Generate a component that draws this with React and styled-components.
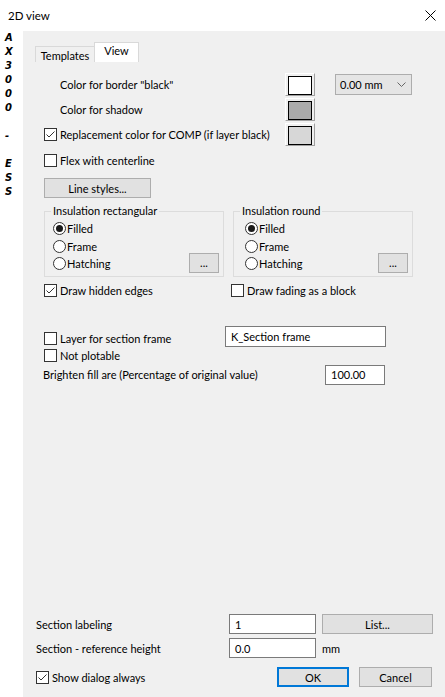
import React from "react";
import styled, { createGlobalStyle, css } from "styled-components";

const Global = createGlobalStyle`
  html, body { margin: 0; padding: 0; background: #fff; }
  body { font-family: Lato, "Noto Sans", sans-serif; font-size: 11px; color: #000; }
  * { box-sizing: border-box; }
`;

const Window = styled.div`
  width: 445px;
  height: 697px;
  display: flex;
  flex-direction: column;
  overflow: hidden;
  background: #fff;
`;

const TitleBar = styled.div`
  height: 31px;
  flex: none;
  display: flex;
  align-items: center;
  justify-content: space-between;
  padding: 0 9px 0 8px;
  background: #fff;
  font-size: 11.5px;
`;

const Body = styled.div`
  flex: 1;
  display: flex;
  min-height: 0;
`;

const SideStrip = styled.div`
  width: 23px;
  flex: none;
  background: #fff;
  display: flex;
  flex-direction: column;
  padding-left: 5px;
  font-family: "DejaVu Sans", sans-serif;
  font-weight: bold;
  font-style: italic;
  font-size: 10px;
  line-height: 14px;
`;

const SideChar = styled.span`
  height: 14px;
`;

const Main = styled.div`
  flex: 1;
  background: #f0f0f0;
  display: flex;
  flex-direction: column;
`;

const TabBar = styled.div`
  display: flex;
  align-items: flex-end;
  height: 20px;
  margin: 11px 0 0 12px;
`;

const Tab = styled.div`
  border: 1px solid #d9d9d9;
  border-bottom: none;
  display: flex;
  align-items: center;
  justify-content: center;
  ${(p) =>
    p.$active
      ? css`
          height: 20px;
          width: 45px;
          background: #fff;
          padding-bottom: 4px;
        `
      : css`
          height: 16px;
          width: 59px;
          background: #f0f0f0;
          border-right: none;
          padding-top: 1px;
        `}
`;

const Page = styled.div`
  display: flex;
  flex-direction: column;
  padding: 11px 0 0 21px;
`;

const FormRow = styled.div`
  display: grid;
  grid-template-columns: 241px 30px 20px 77px;
  align-items: center;
  height: 23px;
  margin-top: ${(p) => p.$mt || 0}px;
`;

const Label = styled.span`
  padding-left: ${(p) => p.$indent || 0}px;
  white-space: nowrap;
`;

const Swatch = styled.div`
  width: 30px;
  height: 23px;
  padding: 2px;
  border: 1px solid;
  border-color: #fff #a0a0a0 #a0a0a0 #fff;
  background: #f0f0f0;
  &::after {
    content: "";
    display: block;
    height: 100%;
    border: 1px solid #000;
    background: ${(p) => p.$color};
  }
`;

const Select = styled.div`
  grid-column: 4;
  width: 77px;
  height: 21px;
  border: 1px solid #adadad;
  background: #e5e5e5;
  display: flex;
  align-items: center;
  justify-content: space-between;
  padding: 0 5px 0 4px;
`;

const CheckWrap = styled.label`
  display: flex;
  align-items: center;
  gap: 3px;
  height: 15px;
  white-space: nowrap;
  margin-top: ${(p) => p.$mt || 0}px;
`;

const Box = styled.span`
  width: 13px;
  height: 13px;
  flex: none;
  border: 1px solid #333;
  background: #fff;
  display: flex;
  align-items: center;
  justify-content: center;
`;

const Circle = styled(Box)`
  border-radius: 50%;
  &::after {
    content: "";
    display: ${(p) => (p.$on ? "block" : "none")};
    width: 7px;
    height: 7px;
    border-radius: 50%;
    background: #1a1a1a;
  }
`;

const Button = styled.div`
  width: ${(p) => p.$w}px;
  height: 20px;
  flex: none;
  border: ${(p) => (p.$default ? "2px solid #0078d7" : "1px solid #adadad")};
  background: #e1e1e1;
  display: flex;
  align-items: center;
  justify-content: center;
  margin-top: ${(p) => p.$mt || 0}px;
`;

const Groups = styled.div`
  display: flex;
  gap: 9px;
  margin-top: 6px;
`;

const Group = styled.fieldset`
  width: 180px;
  margin: 0;
  padding: 2px 4px 3px ${(p) => p.$pl}px;
  border: 1px solid #dcdcdc;
  display: flex;
  align-items: flex-end;
  justify-content: space-between;
`;

const Legend = styled.legend`
  margin-left: ${(p) => p.$ml}px;
  padding: 0 2px;
  line-height: 14px;
`;

const RadioList = styled.div`
  display: flex;
  flex-direction: column;
`;

const RadioRow = styled.label`
  display: flex;
  align-items: center;
  gap: 1px;
  height: 17.5px;
`;

const PairRow = styled.div`
  display: grid;
  grid-template-columns: 187px auto;
  margin-top: 6px;
`;

const LayerRow = styled.div`
  display: grid;
  grid-template-columns: 181px 161px;
  align-items: start;
  margin-top: 28px;
`;

const Input = styled.div`
  width: ${(p) => p.$w}px;
  height: ${(p) => p.$h || 20}px;
  border: 1px solid #7a7a7a;
  background: #fff;
  display: flex;
  align-items: center;
  padding-left: 5px;
  white-space: nowrap;
`;

const BrightRow = styled.div`
  display: grid;
  grid-template-columns: 282px 60px;
  align-items: center;
  margin: 2px 0 0 -1px;
`;

const Bottom = styled.div`
  margin-top: auto;
  padding: 0 0 10px 13px;
  display: flex;
  flex-direction: column;
  gap: 4px;
`;

const BottomRow = styled.div`
  display: grid;
  grid-template-columns: 193px 87px 6px auto;
  align-items: center;
  height: 20px;
`;

const ActionRow = styled.div`
  display: flex;
  align-items: center;
  height: 20px;
  margin-top: 5px;
`;

const Actions = styled.div`
  margin-left: auto;
  margin-right: 13px;
  display: flex;
  gap: 10px;
`;

const Check = ({ on }) => (
  <Box>
    {on && (
      <svg width="11" height="11" viewBox="0 0 11 11">
        <path d="M1.5 5.5 L4 8 L9.5 2.5" fill="none" stroke="#333" strokeWidth="1" />
      </svg>
    )}
  </Box>
);

const CheckItem = ({ on, children, mt }) => (
  <CheckWrap $mt={mt}>
    <Check on={on} />
    <span>{children}</span>
  </CheckWrap>
);

const Radio = ({ on, children }) => (
  <RadioRow>
    <Circle $on={on} />
    <span>{children}</span>
  </RadioRow>
);

const Chevron = () => (
  <svg width="9" height="6" viewBox="0 0 9 6">
    <path d="M0.5 0.5 L4.5 4.5 L8.5 0.5" fill="none" stroke="#666" strokeWidth="1" />
  </svg>
);

const CloseIcon = () => (
  <svg width="11" height="11" viewBox="0 0 11 11">
    <path d="M0.5 0.5 L10.5 10.5 M10.5 0.5 L0.5 10.5" stroke="#000" strokeWidth="1" />
  </svg>
);

const sideChars = ["A", "X", "3", "0", "0", "0", "", "-", "", "E", "S", "S"];

export default function App() {
  return (
    <Window>
      <Global />
      <TitleBar>
        <span>2D view</span>
        <CloseIcon />
      </TitleBar>
      <Body>
        <SideStrip>
          {sideChars.map((c, i) => (
            <SideChar key={i}>{c}</SideChar>
          ))}
        </SideStrip>
        <Main>
          <TabBar>
            <Tab>Templates</Tab>
            <Tab $active>View</Tab>
          </TabBar>
          <Page>
            <FormRow>
              <Label $indent={16}>Color for border "black"</Label>
              <Swatch $color="#ffffff" />
              <Select>
                <span>0.00 mm</span>
                <Chevron />
              </Select>
            </FormRow>
            <FormRow $mt={2}>
              <Label $indent={16}>Color for shadow</Label>
              <Swatch $color="#ababab" />
            </FormRow>
            <FormRow $mt={2}>
              <CheckItem on>Replacement color for COMP (if layer black)</CheckItem>
              <Swatch $color="#d7d7d7" />
            </FormRow>
            <CheckItem mt={7}>Flex with centerline</CheckItem>
            <Button $w={107} $mt={10}>Line styles...</Button>
            <Groups>
              <Group $pl={8}>
                <Legend $ml={-2}>Insulation rectangular</Legend>
                <RadioList>
                  <Radio on>Filled</Radio>
                  <Radio>Frame</Radio>
                  <Radio>Hatching</Radio>
                </RadioList>
                <Button $w={30}>...</Button>
              </Group>
              <Group $pl={11}>
                <Legend $ml={-5}>Insulation round</Legend>
                <RadioList>
                  <Radio on>Filled</Radio>
                  <Radio>Frame</Radio>
                  <Radio>Hatching</Radio>
                </RadioList>
                <Button $w={30}>...</Button>
              </Group>
            </Groups>
            <PairRow>
              <CheckItem on>Draw hidden edges</CheckItem>
              <CheckItem>Draw fading as a block</CheckItem>
            </PairRow>
            <LayerRow>
              <CheckItem mt={5}>Layer for section frame</CheckItem>
              <Input $w={161} $h={21}>K_Section frame</Input>
            </LayerRow>
            <CheckItem mt={1}>Not plotable</CheckItem>
            <BrightRow>
              <Label>Brighten fill are (Percentage of original value)</Label>
              <Input $w={60}>100.00</Input>
            </BrightRow>
          </Page>
          <Bottom>
            <BottomRow>
              <Label>Section labeling</Label>
              <Input $w={87}>1</Input>
              <span />
              <Button $w={111}>List...</Button>
            </BottomRow>
            <BottomRow>
              <Label>Section - reference height</Label>
              <Input $w={87}>0.0</Input>
              <span />
              <Label>mm</Label>
            </BottomRow>
            <ActionRow>
              <CheckItem on>Show dialog always</CheckItem>
              <Actions>
                <Button $w={72} $default>OK</Button>
                <Button $w={73}>Cancel</Button>
              </Actions>
            </ActionRow>
          </Bottom>
        </Main>
      </Body>
    </Window>
  );
}
